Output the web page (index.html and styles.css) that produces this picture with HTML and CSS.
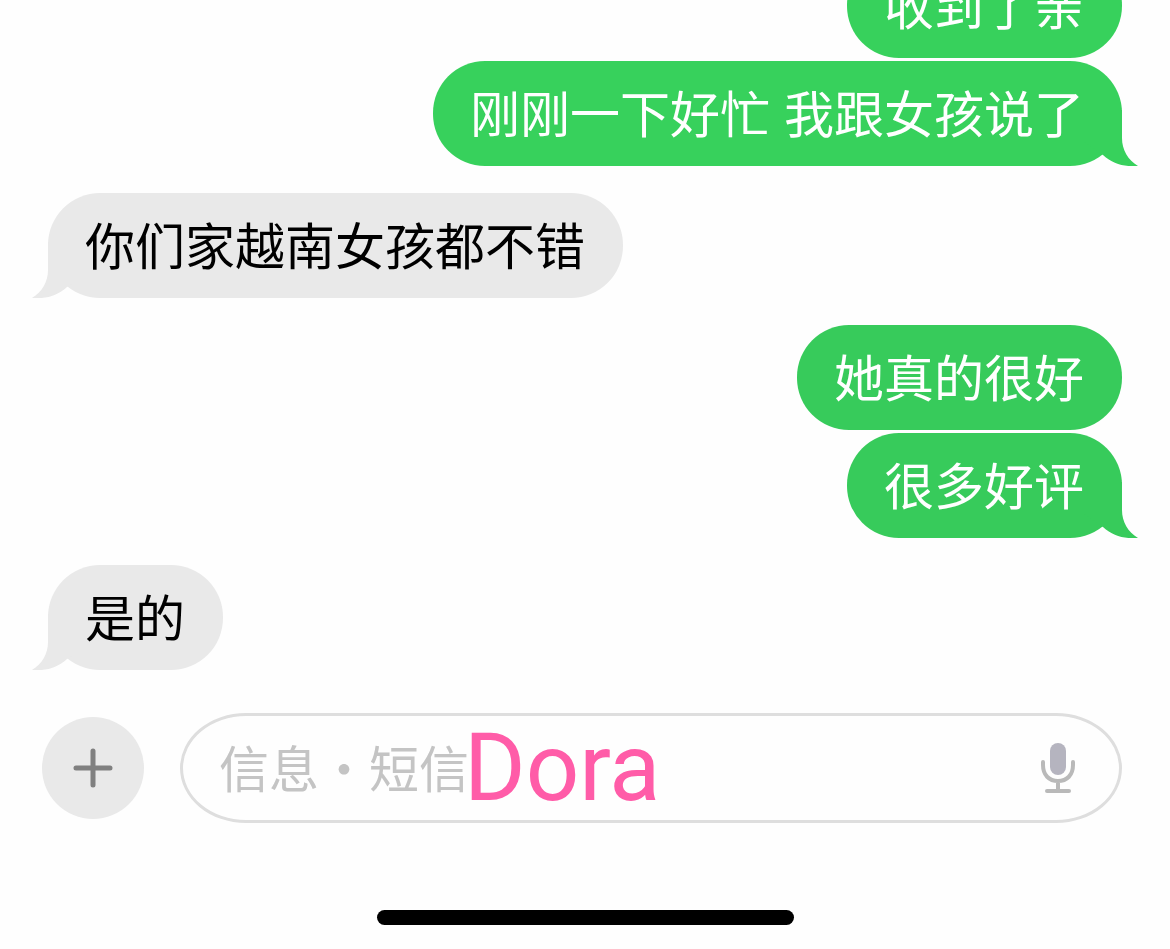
FILE: index.html
```html
<!DOCTYPE html>
<html lang="zh-CN">
<head>
    <meta charset="UTF-8">
    <meta name="viewport" content="width=device-width, initial-scale=1.0">
    <title>信息</title>
    <link rel="stylesheet" href="styles.css">
</head>
<body>
<svg class="symbols" aria-hidden="true">
    <symbol id="tail" viewBox="0 0 60 60">
        <path d="M44 4V32C44 44 50 54 60 60C46 61 35 58 25 49L6 36V4Z"/>
    </symbol>
</svg>

<div class="app">
    <main class="chat">
        <div class="group sent">
            <div class="bubble">收到了亲</div>
            <div class="bubble">刚刚一下好忙 我跟女孩说了<svg class="tail"><use href="#tail"/></svg></div>
        </div>
        <div class="group received">
            <div class="bubble">你们家越南女孩都不错<svg class="tail"><use href="#tail"/></svg></div>
        </div>
        <div class="group sent late">
            <div class="bubble">她真的很好</div>
            <div class="bubble">很多好评<svg class="tail"><use href="#tail"/></svg></div>
        </div>
        <div class="group received">
            <div class="bubble">是的<svg class="tail"><use href="#tail"/></svg></div>
        </div>
    </main>

    <form class="composer">
        <button class="add" type="button" aria-label="添加">
            <svg width="40" height="40" viewBox="0 0 40 40">
                <path d="M20 3V37M3 20H37"/>
            </svg>
        </button>
        <div class="field">
            <input type="text" aria-label="信息" placeholder="信息•短信">
            <button class="mic" type="button" aria-label="听写">
                <svg width="36" height="52" viewBox="0 0 36 52">
                    <rect x="10" y="1" width="16" height="32" rx="8"/>
                    <path d="M3 20V23C3 33 9 39 18 39S33 33 33 23V20M18 39V49M7 49H29"/>
                </svg>
            </button>
            <span class="watermark">Dora</span>
        </div>
    </form>

    <div class="home-bar"></div>
</div>
</body>
</html>
```

FILE: styles.css
```css
* {
    box-sizing: border-box;
}
body {
    margin: 0;
    background-color: #fefefe;
    font-family: "Noto Sans CJK SC", sans-serif;
}
.symbols {
    position: absolute;
    width: 0;
    height: 0;
}
.app {
    display: flex;
    flex-direction: column;
    height: 100vh;
}

/* messages */
.chat {
    flex: 1;
    min-height: 0;
    overflow: hidden;
    display: flex;
    flex-direction: column;
    justify-content: flex-end;
    gap: 27px;
    padding: 0 48px;
}
.group {
    display: flex;
    flex-direction: column;
    flex-shrink: 0;
    gap: 3px;
}
.sent {
    align-items: flex-end;
    color: #fff;
    --bubble: #37d15c;
}
.late {
    --bubble: #37cb5b;
}
.received {
    align-items: flex-start;
    color: #000;
    --bubble: #e9e9e9;
}
.bubble {
    position: relative;
    padding: 17px 38px 13px 37px;
    border-radius: 52px;
    background-color: var(--bubble);
    font-family: Inter, "Noto Sans CJK SC", sans-serif;
    font-size: 50px;
    line-height: 75px;
}
.tail {
    position: absolute;
    right: -16px;
    bottom: 0;
    width: 60px;
    height: 60px;
    fill: var(--bubble);
}
.received .tail {
    right: auto;
    left: -16px;
    transform: scaleX(-1);
}

/* input row */
.composer {
    display: flex;
    align-items: center;
    gap: 36px;
    margin: 43px 48px 0 42px;
}
button {
    border: none;
    padding: 0;
    background: none;
    cursor: pointer;
}
.add {
    display: flex;
    align-items: center;
    justify-content: center;
    width: 102px;
    height: 102px;
    border-radius: 50%;
    background-color: #e9e9e9;
}
.add svg {
    fill: none;
    stroke: #808080;
    stroke-width: 5;
    stroke-linecap: round;
}
.field {
    position: relative;
    flex: 1;
    display: flex;
    align-items: center;
    height: 110px;
    padding: 0 43px 0 36px;
    border: 3px solid #dedede;
    border-radius: 66px / 55px;
}
.field input {
    flex: 1;
    min-width: 0;
    height: 72px;
    margin-bottom: 4px;
    padding: 0;
    border: none;
    outline: none;
    background: none;
    font-family: inherit;
    font-size: 50px;
}
.field input::placeholder {
    color: #c4c4c4;
    opacity: 1;
}
.mic svg {
    display: block;
    fill: #b5b4bf;
}
.mic path {
    fill: none;
    stroke: #b9b9b9;
    stroke-width: 4;
    stroke-linecap: round;
}
.watermark {
    position: absolute;
    left: 281px;
    top: 0;
    color: #ff5ca8;
    font-family: Roboto, sans-serif;
    font-size: 94px;
    line-height: 104px;
    pointer-events: none;
}

.home-bar {
    width: 417px;
    height: 15px;
    margin: 87px auto 24px;
    border-radius: 8px;
    background-color: #000;
}
```
